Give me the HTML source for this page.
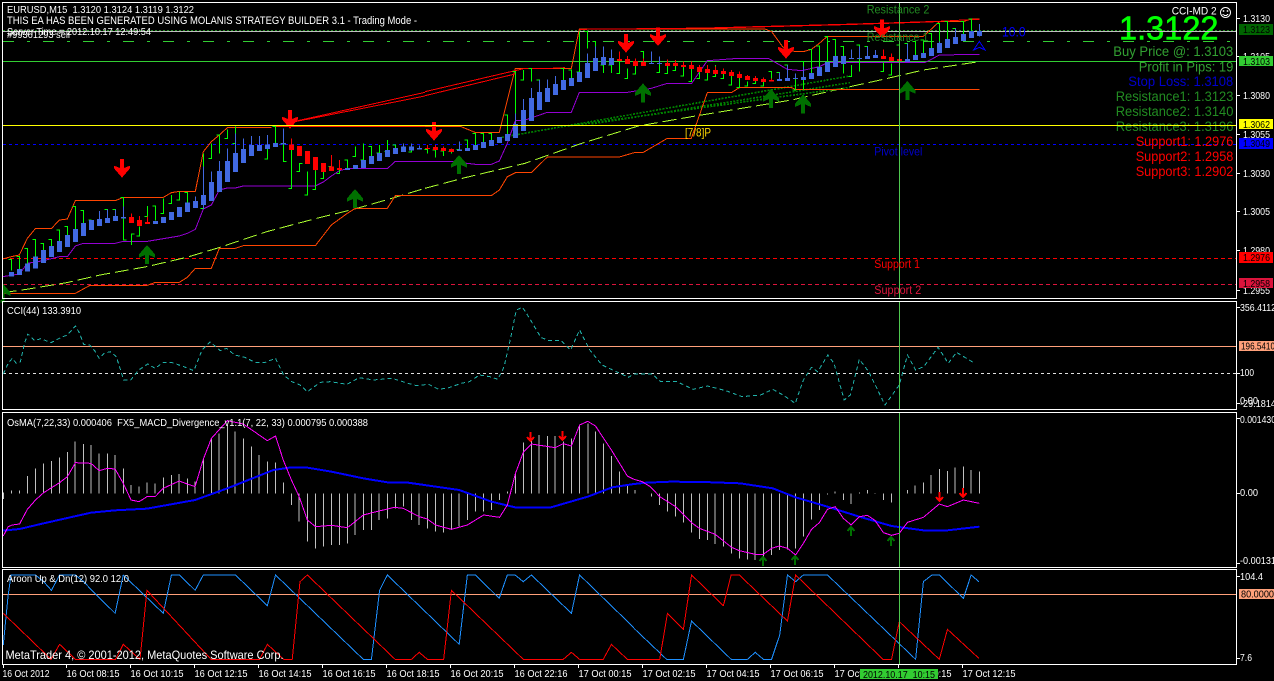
<!DOCTYPE html>
<html><head><meta charset="utf-8"><title>EURUSD,M15</title>
<style>
html,body{margin:0;padding:0;background:#000;width:1274px;height:681px;overflow:hidden}
svg{display:block}
text{font-family:"Liberation Sans",sans-serif;white-space:pre}
.w{fill:#fff;font-size:10.5px}
.a{fill:#fff;font-size:10.5px}
.k{fill:#000;font-size:10.5px}
.b{font-size:13.5px}
path,line,rect,polygon{shape-rendering:crispEdges}
.ns{vector-effect:non-scaling-stroke}
</style></head><body>
<svg width="1274" height="681" viewBox="0 0 1274 681" xmlns="http://www.w3.org/2000/svg">
<defs>
<path id="rd" d="M-6 0H6V27L24 20V28L0 56L-24 28V20L-6 27Z" fill="#ff0000"/>
<path id="gu" d="M0 0L24 28V38L6 30V57H-6V30L-24 38V28Z" fill="#007000"/>
</defs>
<rect width="1274" height="681" fill="#000"/>

<!-- horizontal levels main -->
<g fill="none" stroke-width="1">
<path d="M3 30.5H1236" stroke="#228b22" stroke-dasharray="2 2"/>
<path d="M3 31.5H1236" stroke="#c0c0c0"/>
<path d="M3 41.5H1236" stroke="#32cd32" stroke-dasharray="11 13 3 13"/>
<path d="M3 61.5H1236" stroke="#32cd32"/>
<path d="M3 144.5H1236" stroke="#0000ff" stroke-dasharray="3 3"/>
<path d="M3 258.5H1236" stroke="#ff0000" stroke-dasharray="4 3"/>
<path d="M3 284.5H1236" stroke="#dc143c" stroke-dasharray="4 3"/>
</g>

<!-- group 1 -->
<g transform="scale(.33333)" fill="none">
<path stroke="#adff2f" stroke-width="3" stroke-dasharray="42 15" d="M8 878L80 868L200 848L300 825L440 800L560 772L660 742L800 695L950 655L1060 628L1165 598L1275 565"/>
<path stroke="#ff4500" stroke-width="3" d="M8 880H226L270 856H442L466 847H538L562 832L586 805H634L658 745H706L730 737H946L994 675L1042 640L1066 625H1162L1186 587H1275"/>
<path stroke="#9400d3" stroke-width="3" d="M8 830L58 822L82 790L130 782L178 770H202L226 738L250 730H346L370 724H442L490 716L538 708L562 700L586 688L610 627L634 615L658 570L682 564H706L730 558H946L970 546L994 528L1018 512L1042 506H1162L1186 484H1275"/>
<path stroke="#ff4500" stroke-width="3" d="M8 777L34 770L58 765L82 715L106 686H154L178 660L202 657L226 602H346L370 592H490L514 578L538 574H586L610 455L634 425L658 405L682 383H815"/>
<path stroke="#ff2000" stroke-width="5" d="M820 379H1275"/>
<path stroke="#ff0000" stroke-width="3" d="M880 365L1275 277M880 366L1275 288"/>
<path stroke="#00ff00" stroke-width="3" d="M26 778h8V812M50 770h8V808M73 745h9V792M97 718h9V770M121 730h9V750M145 718h9V738M169 690h9V723M193 680h9V705M217 620h9V687M241 632h9V669M265 660h9V660M313 628h9V654M337 628h9V648M361 592h9V720h9M403 702h-9V735M409 708h9V680M433 650h9V618M457 618h9V662M481 640h9V595M505 610h9V585M529 600h9V575M553 578h9V608M601 625h9V460M625 475h9V430M649 405h9V460M673 415h9V388M697 430h9V380M793 477h9V447M817 380h9V429M841 430h9V485h9M865 565h9V450M889 515h9V490h9M913 585h9V515M937 568h9V510M961 535h9V490M985 500h9V465M1009 520h9V480M1033 480h9V504M1057 470h9V440M1081 480h9V430M1105 440h9V468M1129 459h9V435M1153 455h9V420M1177 435h9V444M1225 456h9V451"/>
<path stroke="#4169e1" stroke-width="3" d="M298 633V657M322 628V654M346 628V648M370 620V651M586 590V603M610 500V625M634 515V546M658 483V513M682 445V483M706 400V459M730 415V447M754 408V435M778 408V435M802 405V433M850 385V429M1210 430V440M1234 430V440M1258 436V444"/>
<path stroke="#ff0000" stroke-width="3" d="M394 640V651M418 648V660M442 650V666M874 415V433M946 472V512M994 465V500M1018 480V504"/>
<path stroke="#4169e1" stroke-width="15" d="M34 816V830M58 807V825M82 790V815M106 770V806M130 750V789M154 738V771M178 723V756M202 705V741M226 687V726M250 669V708M274 660V690M298 657V678M322 654V669M346 648V663M370 651V656M466 663V672M490 651V669M514 636V660M538 621V651M562 608V636M586 603V624M610 585V615M634 546V603M658 513V576M682 483V546M706 459V516M730 447V489M754 435V468M778 435V453M802 433V447M826 429V441M850 429V433M1042 504V510M1066 495V507M1090 480V504M1114 468V492M1138 459V483M1162 450V471M1186 444V462M1210 440V456M1234 440V451M1258 444V449"/>
<path stroke="#ff0000" stroke-width="15" d="M394 651V669M418 660V678M442 666V672M874 433V450M898 438V468M922 453V492M946 471V510M970 489V516M994 500V513M1018 504V510"/>
<g>
<use href="#rd" x="366" y="477"/>
<use href="#rd" x="870" y="330"/>
<use href="#gu" x="441" y="735"/>
<use href="#gu" x="1065" y="567"/>
<use href="#gu" x="8" y="850"/>
</g>
</g>
<rect x="0" y="0" width="2" height="300" fill="#000"/>

<!-- group 2 -->
<g transform="translate(425 0) scale(.33333)" fill="none">
<path stroke="#adff2f" stroke-width="3" stroke-dasharray="42 15" d="M0 565L120 533L300 490L470 430L640 378L800 350L950 325L1100 300L1275 260"/>
<path stroke="#008000" stroke-width="5" stroke-dasharray="6 4" d="M230 412L1275 228M430 378L1275 262M500 372L1275 248"/>
<path stroke="#ff4500" stroke-width="3" d="M0 587H199L223 570L247 530L271 518H319L367 471H583L631 457H655L727 415H799L847 278H919L943 263H1100L1111 268H1275"/>
<path stroke="#9400d3" stroke-width="3" d="M0 484H79L151 493H199L223 483L247 430L271 362H295L367 337H439L463 277H607L679 265L727 250H800L847 182L940 175H1030L1087 208L1130 212L1183 200L1207 188H1275"/>
<path stroke="#ff4500" stroke-width="3" d="M0 379H106L150 397H223L271 205H439L463 87H1020L1040 95L1075 143L1111 155H1135L1159 148L1183 130L1207 109H1275"/>
<path stroke="#ff0000" stroke-width="3" d="M0 275L270 212M0 287L270 222M270 212L300 205H380L420 203M463 88L860 84L1275 73"/>
<path stroke="#ff0000" stroke-width="4" d="M860 84L1275 73"/>
<path stroke="#00ff00" stroke-width="3" d="M-1 448h8V460M23 450h8V472M47 453h8V468M71 455h8V460M95 449h8V425M119 420h8V444M143 400h8V435M167 400h8V426M191 400h8V420M239 345h8V402M263 215h8V372M287 240h8V210M311 205h8V245M335 240h8V276M407 205h8V240M431 210h8V234M455 216h8V95M479 95h8V145M503 125h8V174M527 195h8V219M551 195h8V219M575 220h8V183M599 235h8V205M623 222h8V198M647 155h8V186M695 218h8V192M719 220h8V198M743 212h8V198M767 228h8V201M791 245h8V207M815 235h8V216M839 240h8V219M863 230h8V195M887 235h8V222M911 255h8V228M935 262h8V234M959 258h8V245M983 250h8V243M1007 258h8V246M1031 215h8V240M1055 217h8V237M1079 195h8V234M1103 270h8V237M1127 185h8V270M1151 148h8V219M1175 138h8V201M1199 110h8V186M1223 118h8V168M1247 140h8V220"/>
<path stroke="#4169e1" stroke-width="3" d="M103 425V449M271 340V372M295 297V330M319 264V294M343 240V276M367 238V264M391 228V252M487 160V189M511 140V174M535 140V171M559 148V174M679 155V189M703 170V189M1063 217V237M1087 195V234M1111 220V234M1135 200V231"/>
<path stroke="#ff0000" stroke-width="3" d="M7 435V444M31 435V441M55 440V444M79 445V447M583 155V177M607 168V177M631 175V183M655 175V186M727 178V189M751 180V189M775 185V195M799 185V195M823 195V201M847 195V207M871 200V210M895 205V213M919 210V216M943 215V222M967 225V228M991 228V234M1015 233V237M1039 235V240"/>
<path stroke="#4169e1" stroke-width="15" d="M103 449V453M127 444V453M151 435V450M175 426V444M199 420V438M223 411V429M247 402V423M271 372V414M295 330V393M319 294V363M343 276V330M367 264V306M391 252V285M415 240V270M439 234V258M463 216V246M487 189V234M511 174V213M535 171V195M559 174V195M679 189V192M703 189V192M1063 237V243M1087 234V243M1111 234V237M1135 231V240M1159 219V237M1183 201V228M1207 186V216M1231 168V201M1255 168V192"/>
<path stroke="#ff0000" stroke-width="15" d="M7 444V447M31 441V450M55 444V453M79 447V456M583 177V183M607 177V192M631 183V198M655 186V198M727 189V198M751 189V198M775 195V201M799 195V207M823 201V216M847 207V219M871 210V222M895 213V222M919 216V228M943 222V234M967 228V240M991 234V243M1015 237V246M1039 240V245"/>
<use href="#rd" x="27" y="366"/>
<use href="#rd" x="603" y="102"/>
<use href="#rd" x="699" y="82"/>
<use href="#rd" x="1083" y="120"/>
<use href="#gu" x="102" y="465"/>
<use href="#gu" x="654" y="250"/>
<use href="#gu" x="1038" y="267"/>
<use href="#gu" x="1134" y="283"/>
</g>

<!-- group 3 -->
<g transform="translate(850 0) scale(.33333)" fill="none">
<path stroke="#adff2f" stroke-width="3" stroke-dasharray="42 15" d="M0 260L100 238L220 210L388 185"/>
<path stroke="#ff4500" stroke-width="3" d="M0 268H388"/>
<path stroke="#9400d3" stroke-width="3" d="M0 187H226L244 178L268 165L388 163"/>
<path stroke="#ff4500" stroke-width="3" d="M0 109H220L268 65H340L364 57H388"/>
<path stroke="#ff0000" stroke-width="4" d="M0 73L250 65"/>
<path stroke="#ff0000" stroke-width="3" d="M250 65L340 60L388 58"/>
<path stroke="#00ff00" stroke-width="3" d="M-4 230h8V195M20 135h8V215M44 140h8V168M92 215h8V188M116 225h8V190M140 135h8V177M164 130h8V177M188 125h8V165M212 120h8V159M236 100h8V144M260 70h8V129M284 65h8V117M308 85h8V111M332 65h8V102M356 57h8V93"/>
<path stroke="#4169e1" stroke-width="3" d="M4 148V174M28 140V174M52 140V168M76 150V165M172 130V177M268 125V129M316 85V111M388 72V110"/>
<path stroke="#ff0000" stroke-width="3" d="M100 148V168M124 160V171"/>
<path stroke="#4169e1" stroke-width="15" d="M4 174V177M28 174V177M52 168V177M76 165V174M172 177V186M196 165V180M220 159V174M244 144V168M268 129V159M292 117V144M316 111V132M340 102V123M364 93V114M388 93V108"/>
<path stroke="#ff0000" stroke-width="15" d="M100 168V177M124 171V183M148 177V183"/>
<use href="#rd" x="96" y="58"/>
<use href="#gu" x="172" y="243"/>
<path d="M388 124L405 150L388 142L371 150Z" fill="none" stroke="#0000ff" stroke-width="3"/>
</g>

<path d="M3 125.5H1236" stroke="#ffff00" stroke-width="1" fill="none"/>

<!-- CCI panel -->
<path d="M3 346.5H1236" stroke="#ffa07a" fill="none"/>
<path d="M3 373.5H1236" stroke="#e0e0e0" stroke-dasharray="3 3" fill="none"/>
<g transform="translate(0 300) scale(.40816 .33333)" fill="none">
<path class="ns" stroke="#20b2aa" stroke-width="1" stroke-dasharray="4 3" d="M8 222L20 190L30 175L40 190L50 185L60 130L68 102L85 122L100 116L125 128L150 112L165 105L185 78L195 100L205 133L220 135L232 152L243 175L255 160L270 155L285 170L303 240L320 240L340 210L362 192L380 205L400 187L420 187L450 200L475 212L495 150L515 126L540 152L555 145L575 165L600 172L625 187L650 187L675 175L695 225L715 245L735 255L753 275L785 247L810 245L850 253L880 233L915 240L960 235L1000 250L1020 257L1050 253L1075 268L1100 263L1130 250L1150 245L1175 225L1200 230L1220 238L1235 200L1250 120L1265 30L1280 22L1295 50L1325 112L1345 122L1375 122L1398 150L1420 90L1445 150L1475 195L1510 215L1540 232L1553 222"/>
</g>
<g transform="translate(634 300) scale(.40816 .33333)" fill="none">
<path class="ns" stroke="#20b2aa" stroke-width="1" stroke-dasharray="4 3" d="M0 222L45 222L65 245L105 245L145 268L180 258L225 272L265 290L310 285L340 268L365 285L395 310L415 240L435 202L450 215L475 165L490 190L515 300L530 285L552 178L575 215L615 315L650 255L670 165L690 210L710 200L745 142L770 190L790 157L835 190"/>
</g>

<!-- OsMA panel -->
<g transform="translate(0 300) scale(.40816 .33333)" fill="none">
<path class="ns" stroke="#c0c0c0" stroke-width="1" d="M8 578V597M28 580V572M48 580V572M67 580V528M87 580V506M107 580V490M126 580V483M146 580V472M165 580V456M184 580V425M204 580V432M223 580V435M243 580V460M263 580V460M282 580V465M302 580V505M321 580V555M341 580V560M360 580V548M380 580V550M400 580V533M420 580V525M439 580V522M459 580V535M478 580V545M498 580V478M518 580V415M537 580V400M557 580V375M576 580V395M596 580V415M616 580V440M635 580V465M655 580V485M675 580V487M694 580V548M714 580V615M733 580V665M753 580V725M773 580V745M792 580V740M812 580V735M832 580V735M851 580V730M870 580V705M890 580V690M910 580V690M929 580V660M949 580V655M969 580V625M988 580V620M1008 580V660M1027 580V675M1047 580V685M1067 580V695M1086 580V698M1106 580V690M1125 580V680M1145 580V660M1165 580V635M1185 580V635M1204 580V630M1224 580V600M1243 580V575M1263 580V520M1282 580V428M1302 580V415M1321 580V405M1341 580V408M1360 580V408M1380 580V425M1400 580V415M1420 580V375M1440 580V370M1459 580V395M1478 580V430M1498 580V468M1518 580V515M1537 580V555"/>
<path class="ns" stroke="#0000ff" stroke-width="2" d="M8 692L48 687L107 670L223 638L282 631L360 626L478 600L557 565L670 510L714 502L753 503L812 515L890 535L949 547L1000 548L1125 570L1204 605L1262 622L1350 622L1440 590L1500 562L1553 552"/>
<path class="ns" stroke="#ff00ff" stroke-width="1" d="M8 708L20 680L30 675L48 672L67 628L87 600L107 578L146 548L165 530L185 488L223 490L243 512L263 505L282 507L302 550L321 600L341 605L360 590L380 590L400 565L439 543L459 552L478 560L498 478L518 415L557 362L596 372L655 422L675 408L694 480L714 540L733 590L753 660L773 680L812 676L851 683L870 665L890 645L929 633L966 622L988 625L1027 650L1047 657L1067 675L1106 688L1145 675L1165 660L1185 645L1224 652L1243 615L1263 520L1282 457L1302 432L1360 443L1380 431L1400 438L1420 375L1440 364L1459 378L1498 450L1537 528L1553 538"/>
</g>
<g transform="translate(634 300) scale(.40816 .33333)" fill="none">
<path class="ns" stroke="#c0c0c0" stroke-width="1" d="M3 580V570M43 580V590M63 580V615M82 580V635M102 580V650M121 580V668M141 580V698M160 580V717M180 580V720M199 580V732M219 580V740M239 580V760M258 580V775M278 580V778M297 580V780M317 580V770M337 580V765M356 580V750M376 580V748M396 580V745M415 580V710M435 580V658M454 580V630M474 580V583M493 580V575M513 580V600M532 580V612M552 580V578M572 580V570M591 580V582M611 580V600M631 580V608M670 580V570M689 580V557M709 580V548M728 580V525M748 580V507M768 580V513M787 580V503M807 580V500M826 580V510M846 580V515"/>
<path class="ns" stroke="#0000ff" stroke-width="2" d="M0 552L30 548L90 545L170 546L260 550L340 565L396 592L474 620L552 650L631 678L709 691L768 691L846 680"/>
<path class="ns" stroke="#ff00ff" stroke-width="1" d="M0 538L20 545L40 560L63 590L102 620L141 668L160 685L199 703L239 742L258 752L297 763L317 763L337 745L356 738L376 745L396 765L415 730L435 688L454 668L474 628L493 620L513 655L532 675L552 650L572 646L591 662L611 698L631 706L650 700L670 667L709 652L748 612L768 620L807 600L846 610"/>
</g>
<g fill="none" stroke-width="2">
<path stroke="#ff0000" d="M530.5 432V441M527 437L530.5 441L534 437M562.5 431V440M559 436L562.5 440L566 436M939.5 492V501M936 497L939.5 501L943 497M963 488V497M959.5 493L963 497L966.5 493"/>
<path stroke="#007000" d="M763 566V557M759.5 561L763 557L766.5 561M795 565V556M791.5 560L795 556L798.5 560M851 536V527M847.5 531L851 527L854.5 531M891 546V537M887.5 541L891 537L894.5 541"/>
</g>

<!-- Aroon panel -->
<path d="M3 594.5H1236" stroke="#ffa07a" fill="none"/>
<g transform="translate(0 565) scale(.40816 .33333)" fill="none">
<path class="ns" stroke="#1e90ff" stroke-width="1" d="M8 240L20 90L27 30H87L107 50L126 76L146 30H185L205 50L225 76L282 145L302 30L400 145L420 30H440L478 76L498 30H577L655 122L675 30L890 283H910L930 76L949 30L1125 238L1145 30H1165L1223 100L1243 30H1262L1282 50L1302 30L1400 145L1420 30L1553 188"/>
<path class="ns" stroke="#ff0000" stroke-width="1" d="M8 145L125 283L146 238L185 283H283L302 238L343 283L360 76L517 283H636L655 238L695 283H716L735 50L753 30L968 283H1008L1027 262L1047 283H1087L1106 76L1282 283H1380L1400 262L1420 283H1478L1498 238L1537 283H1553"/>
</g>
<g transform="translate(634 565) scale(.40816 .33333)" fill="none">
<path class="ns" stroke="#1e90ff" stroke-width="1" d="M0 190L80 283H121L141 168L238 283H278L297 262L317 283H337L357 210L376 30L396 50L415 30H474L690 283L709 50L730 30H748L807 100L826 30L845 50"/>
<path class="ns" stroke="#ff0000" stroke-width="1" d="M0 283H63L82 145L121 193L141 30L219 122L238 30H258L376 168L396 30L610 283H631L650 170L748 283L768 193L845 280"/>
</g>

<!-- crosshair vertical -->
<path d="M899.5 3V298M899.5 302V410M899.5 413V567M899.5 570V664" stroke="#4fc84f" stroke-width="1" fill="none"/>

<!-- frames -->
<g fill="none" stroke="#fff" stroke-width="1">
<rect x="2.5" y="2.5" width="1234" height="296"/>
<rect x="2.5" y="301.5" width="1234" height="108"/>
<rect x="2.5" y="412.5" width="1234" height="155"/>
<rect x="2.5" y="569.5" width="1234" height="95"/>
<path d="M1237 18.5h3M1237 56.5h3M1237 95.5h3M1237 134.5h3M1237 173.5h3M1237 211.5h3M1237 250.5h3M1237 290.5h3M1237 307.5h3M1237 373.5h3M1237 403.5h3M1237 418.5h3M1237 493.5h3M1237 563.5h3M1237 576.5h3M1237 658.5h3"/>
<path d="M3.5 665v3M66.5 665v3M130.5 665v3M194.5 665v3M258.5 665v3M322.5 665v3M386.5 665v3M450.5 665v3M514.5 665v3M578.5 665v3M642.5 665v3M706.5 665v3M770.5 665v3M834.5 665v3M898.5 665v3M962.5 665v3"/>
</g>

<!-- price axis -->
<text class="a" x="1243" y="22" textLength="27" lengthAdjust="spacingAndGlyphs">1.3130</text>
<text class="a" x="1243" y="60" textLength="27" lengthAdjust="spacingAndGlyphs">1.3105</text>
<text class="a" x="1243" y="99" textLength="27" lengthAdjust="spacingAndGlyphs">1.3080</text>
<text class="a" x="1243" y="138" textLength="27" lengthAdjust="spacingAndGlyphs">1.3055</text>
<text class="a" x="1243" y="177" textLength="27" lengthAdjust="spacingAndGlyphs">1.3030</text>
<text class="a" x="1243" y="215" textLength="27" lengthAdjust="spacingAndGlyphs">1.3005</text>
<text class="a" x="1243" y="254" textLength="27" lengthAdjust="spacingAndGlyphs">1.2980</text>
<text class="a" x="1243" y="294" textLength="27" lengthAdjust="spacingAndGlyphs">1.2955</text>
<rect x="1239" y="24" width="34" height="11" fill="#006400"/>
<text class="k" x="1243" y="33" textLength="27" lengthAdjust="spacingAndGlyphs">1.3123</text>
<rect x="1239" y="56" width="34" height="10" fill="#32cd32"/>
<text class="k" x="1243" y="65" textLength="27" lengthAdjust="spacingAndGlyphs">1.3103</text>
<rect x="1239" y="119" width="34" height="10" fill="#ffff00"/>
<text class="k" x="1243" y="128" textLength="27" lengthAdjust="spacingAndGlyphs">1.3062</text>
<rect x="1239" y="138" width="34" height="11" fill="#0000ff"/>
<text class="k" x="1243" y="147" textLength="27" lengthAdjust="spacingAndGlyphs">1.3049</text>
<rect x="1239" y="252" width="34" height="11" fill="#ff0000"/>
<text class="k" x="1243" y="261" textLength="27" lengthAdjust="spacingAndGlyphs">1.2976</text>
<rect x="1239" y="278" width="34" height="10" fill="#dc143c"/>
<text class="k" x="1243" y="287" textLength="27" lengthAdjust="spacingAndGlyphs">1.2958</text>

<text class="a" x="1240" y="311" textLength="36" lengthAdjust="spacingAndGlyphs">356.4112</text>
<rect x="1239" y="341" width="35" height="10" fill="#ffa07a"/>
<text class="k" x="1241" y="349.5" textLength="34" lengthAdjust="spacingAndGlyphs">196.5410</text>
<text class="a" x="1240" y="376" textLength="14" lengthAdjust="spacingAndGlyphs">100</text>
<text class="a" x="1240" y="404" textLength="18" lengthAdjust="spacingAndGlyphs">0.00</text>
<text class="a" x="1240" y="407" textLength="36" lengthAdjust="spacingAndGlyphs">-29.1814</text>
<text class="a" x="1240" y="423" textLength="36" lengthAdjust="spacingAndGlyphs">0.001430</text>
<text class="a" x="1240" y="496" textLength="18" lengthAdjust="spacingAndGlyphs">0.00</text>
<text class="a" x="1240" y="564" textLength="36" lengthAdjust="spacingAndGlyphs">-0.00131</text>
<text class="a" x="1240" y="580" textLength="23" lengthAdjust="spacingAndGlyphs">104.4</text>
<rect x="1239" y="589" width="35" height="10" fill="#ffa07a"/>
<text class="k" x="1241" y="597.5" textLength="33" lengthAdjust="spacingAndGlyphs">80.0000</text>
<text class="a" x="1240" y="661" textLength="12" lengthAdjust="spacingAndGlyphs">7.6</text>

<!-- time axis -->
<text class="a" x="2.5" y="677" textLength="47" lengthAdjust="spacingAndGlyphs">16 Oct 2012</text>
<text class="a" x="66.5" y="677" textLength="53" lengthAdjust="spacingAndGlyphs">16 Oct 08:15</text>
<text class="a" x="130.5" y="677" textLength="53" lengthAdjust="spacingAndGlyphs">16 Oct 10:15</text>
<text class="a" x="194.5" y="677" textLength="53" lengthAdjust="spacingAndGlyphs">16 Oct 12:15</text>
<text class="a" x="258.5" y="677" textLength="53" lengthAdjust="spacingAndGlyphs">16 Oct 14:15</text>
<text class="a" x="322.5" y="677" textLength="53" lengthAdjust="spacingAndGlyphs">16 Oct 16:15</text>
<text class="a" x="386.5" y="677" textLength="53" lengthAdjust="spacingAndGlyphs">16 Oct 18:15</text>
<text class="a" x="450.5" y="677" textLength="53" lengthAdjust="spacingAndGlyphs">16 Oct 20:15</text>
<text class="a" x="514.5" y="677" textLength="53" lengthAdjust="spacingAndGlyphs">16 Oct 22:16</text>
<text class="a" x="578.5" y="677" textLength="53" lengthAdjust="spacingAndGlyphs">17 Oct 00:15</text>
<text class="a" x="642.5" y="677" textLength="53" lengthAdjust="spacingAndGlyphs">17 Oct 02:15</text>
<text class="a" x="706.5" y="677" textLength="53" lengthAdjust="spacingAndGlyphs">17 Oct 04:15</text>
<text class="a" x="770.5" y="677" textLength="53" lengthAdjust="spacingAndGlyphs">17 Oct 06:15</text>
<text class="a" x="834.5" y="677" textLength="53" lengthAdjust="spacingAndGlyphs">17 Oct 08:15</text>
<text class="a" x="898.5" y="677" textLength="53" lengthAdjust="spacingAndGlyphs">17 Oct 10:15</text>
<text class="a" x="962.5" y="677" textLength="53" lengthAdjust="spacingAndGlyphs">17 Oct 12:15</text>
<rect x="860" y="669" width="78" height="10" fill="#32cd32"/>
<text class="k" x="863" y="678" textLength="72" lengthAdjust="spacingAndGlyphs">2012.10.17  10:15</text>

<!-- panel labels -->
<text class="w" x="7" y="13" textLength="187" lengthAdjust="spacingAndGlyphs">EURUSD,M15  1.3120 1.3124 1.3119 1.3122</text>
<text class="w" x="7" y="24" textLength="410" lengthAdjust="spacingAndGlyphs" style="font-size:11px">THIS EA HAS BEEN GENERATED USING MOLANIS STRATEGY BUILDER 3.1 - Trading Mode -</text>
<text class="w" x="7" y="35" textLength="144" lengthAdjust="spacingAndGlyphs">Server Time = 2012.10.17 12:49:54</text>
<text class="w" x="7" y="38" textLength="63" lengthAdjust="spacingAndGlyphs">#99361293 sell</text>
<text class="w" x="7" y="314" textLength="74" lengthAdjust="spacingAndGlyphs">CCI(44) 133.3910</text>
<text class="w" x="7" y="426" textLength="361" lengthAdjust="spacingAndGlyphs">OsMA(7,22,33) 0.000406  FX5_MACD_Divergence_v1.1(7, 22, 33) 0.000795 0.000388</text>
<text class="w" x="7" y="582" textLength="122" lengthAdjust="spacingAndGlyphs">Aroon Up &amp; Dn(12) 92.0 12.0</text>
<text fill="#fff" x="5.5" y="659" style="font-size:12px" textLength="278" lengthAdjust="spacingAndGlyphs">MetaTrader 4, © 2001-2012, MetaQuotes Software Corp.</text>

<!-- chart objects labels -->
<g style="font-size:12px">
<text fill="#228b22" x="866.7" y="13.5" textLength="62.7" lengthAdjust="spacingAndGlyphs">Resistance 2</text>
<text fill="#228b22" x="866.7" y="41" textLength="61.7" lengthAdjust="spacingAndGlyphs">Resistance 1</text>
<text fill="#0000cd" x="874.3" y="155.5" textLength="48" lengthAdjust="spacingAndGlyphs">Pivot level</text>
<text fill="#ff0000" x="874.3" y="268" textLength="45.7" lengthAdjust="spacingAndGlyphs">Support 1</text>
<text fill="#dc143c" x="874.3" y="294" textLength="47" lengthAdjust="spacingAndGlyphs">Support 2</text>
<text fill="#0000ff" x="1002" y="36.5" textLength="23.7" lengthAdjust="spacingAndGlyphs" style="font-size:14px">10.0</text>
<text fill="#ffd700" x="685" y="136.5" textLength="26" lengthAdjust="spacingAndGlyphs">[7/8]P</text>
</g>
<text fill="#fff" x="1171.7" y="14.5" style="font-size:11px" textLength="45" lengthAdjust="spacingAndGlyphs">CCI-MD 2</text>
<g fill="none" stroke="#fff" stroke-width="1">
<circle cx="1225.5" cy="12.5" r="5"/>
<path d="M1222.8 14c1.2 2 4.2 2 5.4 0" />
</g>
<circle cx="1223.5" cy="11" r=".9" fill="#fff"/><circle cx="1227.5" cy="11" r=".9" fill="#fff"/>

<text fill="#00ff00" stroke="#00ff00" stroke-width=".6" x="1119" y="39.5" style="font-size:33px" textLength="99.5" lengthAdjust="spacingAndGlyphs">1.3122</text>
<text class="b" fill="#32a032" x="1113.3" y="56" textLength="120" lengthAdjust="spacingAndGlyphs">Buy Price @: 1.3103</text>
<text class="b" fill="#32a032" x="1138.7" y="71.5" textLength="94.7" lengthAdjust="spacingAndGlyphs">Profit in Pips: 19</text>
<text class="b" fill="#0000cd" x="1128.3" y="86" textLength="105" lengthAdjust="spacingAndGlyphs">Stop Loss: 1.3108</text>
<text class="b" fill="#228b22" x="1115.7" y="101" textLength="117.7" lengthAdjust="spacingAndGlyphs">Resistance1: 1.3123</text>
<text class="b" fill="#228b22" x="1115.7" y="116" textLength="117.7" lengthAdjust="spacingAndGlyphs">Resistance2: 1.3140</text>
<text class="b" fill="#228b22" x="1115.7" y="131" textLength="117.7" lengthAdjust="spacingAndGlyphs">Resistance3: 1.3196</text>
<text class="b" fill="#ff0000" x="1135.7" y="146" textLength="97.7" lengthAdjust="spacingAndGlyphs">Support1: 1.2976</text>
<text class="b" fill="#ff0000" x="1135.7" y="161" textLength="97.7" lengthAdjust="spacingAndGlyphs">Support2: 1.2958</text>
<text class="b" fill="#ff0000" x="1135.7" y="176" textLength="97.7" lengthAdjust="spacingAndGlyphs">Support3: 1.2902</text>
<path d="M1115 125.5H1236" stroke="#ffff00" stroke-width="1" fill="none"/>
<path d="M1120 31.5H1236" stroke="#c0c0c0" stroke-width="1" fill="none"/>
</svg>
</body></html>
